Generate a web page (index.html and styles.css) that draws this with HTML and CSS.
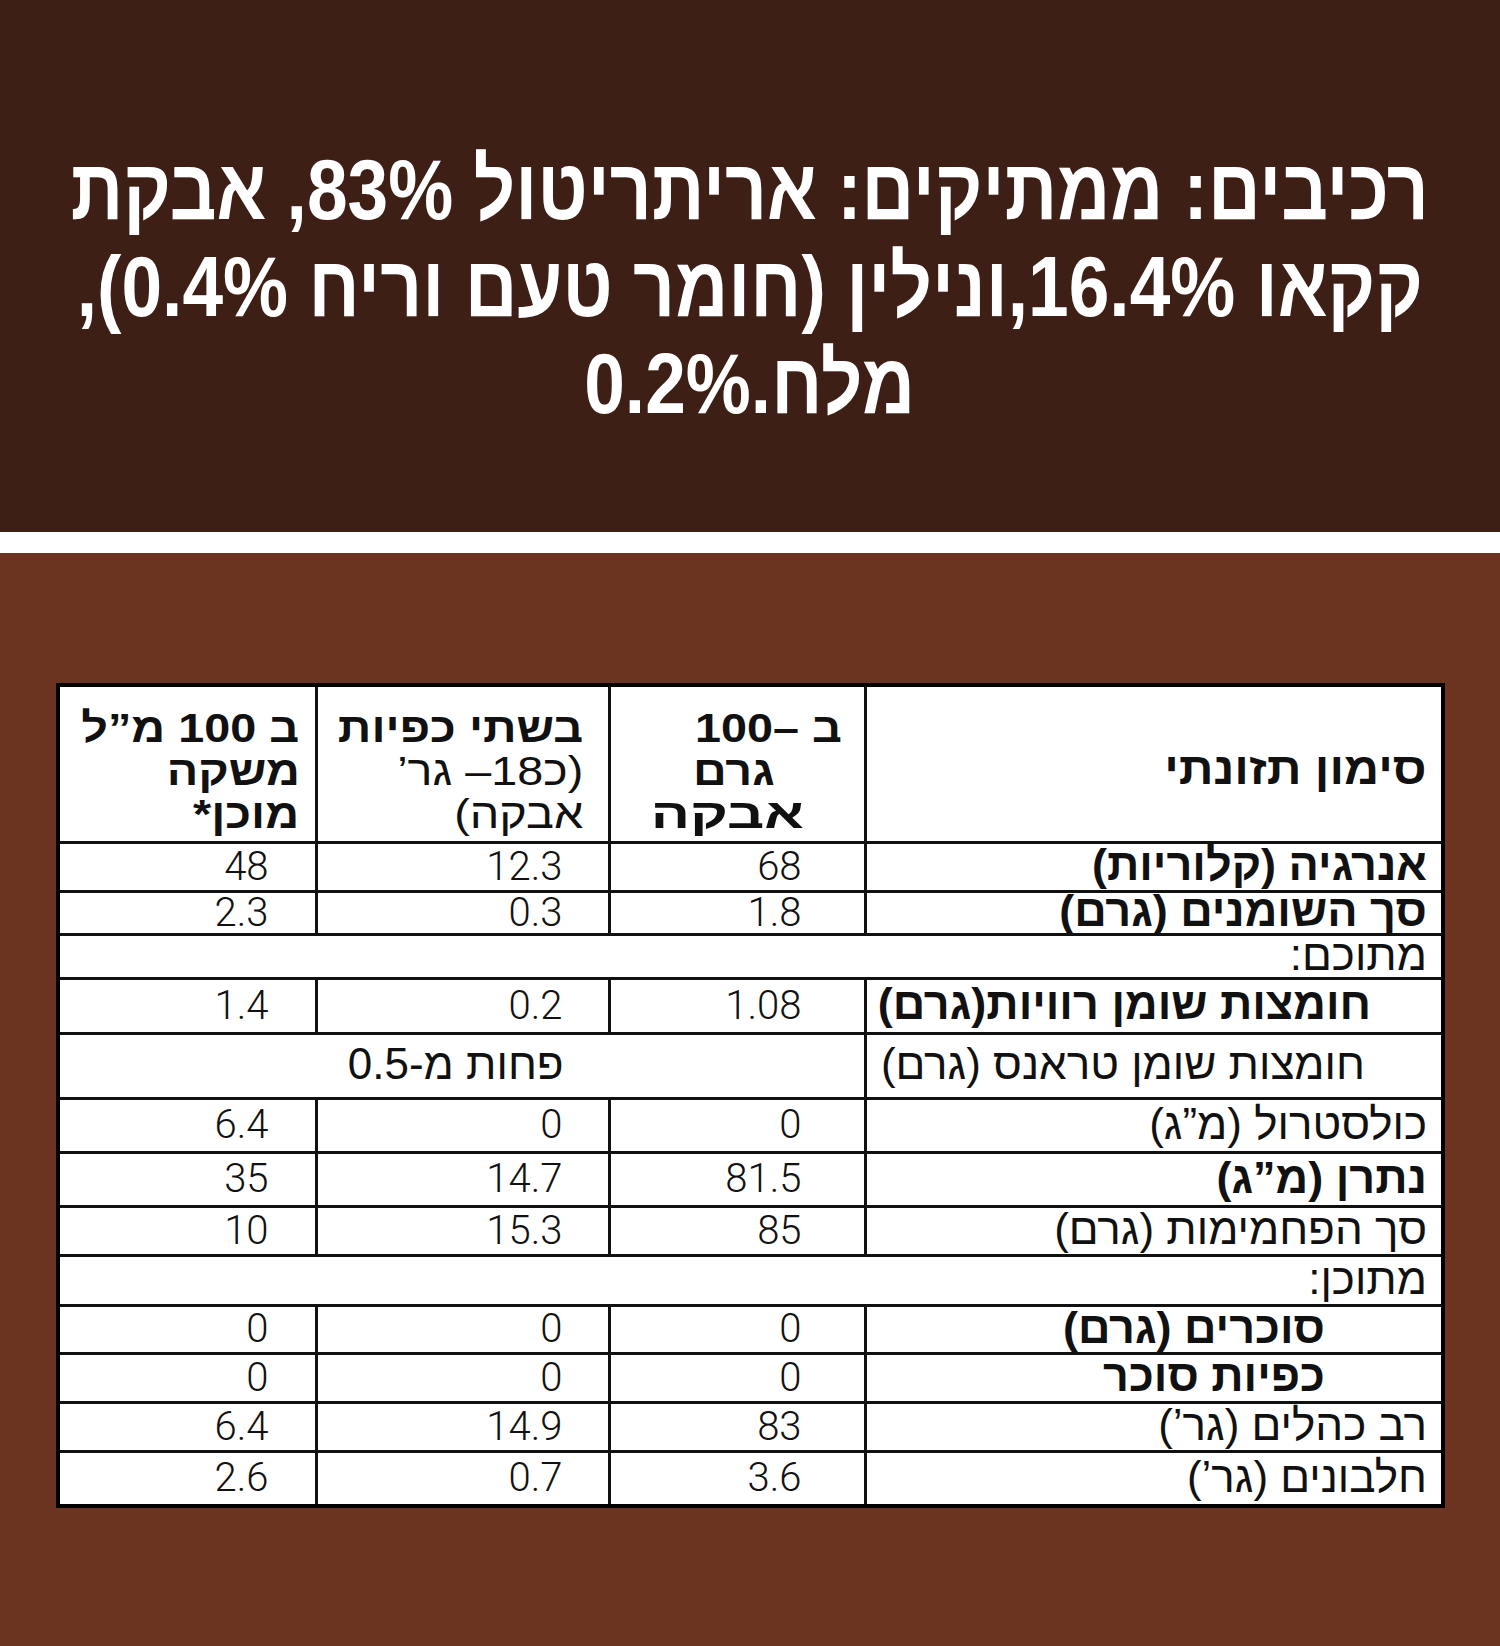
FILE: index.html
```html
<!DOCTYPE html>
<html lang="he">
<head>
<meta charset="utf-8">
<title>רכיבים וסימון תזונתי</title>
<link rel="stylesheet" href="styles.css">
</head>
<body>
<div class="top">
  <div class="title">
    <div class="tl">רכיבים: ממתיקים: אריתריטול 83%, אבקת</div>
    <div class="tl">קקאו 16.4%,ונילין (חומר טעם וריח 0.4%),</div>
    <div class="tl">מלח.0.2%</div>
  </div>
</div>
<div class="band"></div>
<div class="bottom">
  <table class="nut">
    <colgroup>
      <col class="c-lbl"><col class="c-g"><col class="c-tsp"><col class="c-ml">
    </colgroup>
    <tr class="r-head">
      <th class="h-lbl"><span class="lb b hd">סימון תזונתי</span></th>
      <th class="h-col h-g">
        <span class="hl g1"><span class="ht b">ב –100</span></span>
        <span class="hl g2"><span class="ht b">גרם</span></span>
        <span class="hl g3"><span class="ht b">אבקה</span></span>
      </th>
      <th class="h-col h-tsp">
        <span class="hl"><span class="ht b">בשתי כפיות</span></span>
        <span class="hl"><span class="ht">(כ18– גר’</span></span>
        <span class="hl"><span class="ht">אבקה)</span></span>
      </th>
      <th class="h-col h-ml">
        <span class="hl"><span class="ht b">ב 100 מ”ל</span></span>
        <span class="hl"><span class="ht b">משקה</span></span>
        <span class="hl"><span class="ht b">מוכן*</span></span>
      </th>
    </tr>
    <tr class="r-energy">
      <td class="lbl"><span class="lb b">אנרגיה (קלוריות)</span></td>
      <td class="num n-g">68</td><td class="num n-tsp">12.3</td><td class="num n-ml">48</td>
    </tr>
    <tr class="r-fat">
      <td class="lbl"><span class="lb b">סך השומנים (גרם)</span></td>
      <td class="num n-g">1.8</td><td class="num n-tsp">0.3</td><td class="num n-ml">2.3</td>
    </tr>
    <tr class="r-sub1">
      <td class="lbl sub" colspan="4"><span class="lb">מתוכם:</span></td>
    </tr>
    <tr class="r-sat">
      <td class="lbl lbl-sat"><span class="lb b">חומצות שומן רוויות(גרם)</span></td>
      <td class="num n-g">1.08</td><td class="num n-tsp">0.2</td><td class="num n-ml">1.4</td>
    </tr>
    <tr class="r-trans">
      <td class="lbl lbl-trans"><span class="lb">חומצות שומן טראנס (גרם)</span></td>
      <td class="merged" colspan="3"><span class="lb mc">פחות מ-0.5</span></td>
    </tr>
    <tr class="r-chol">
      <td class="lbl"><span class="lb">כולסטרול (מ”ג)</span></td>
      <td class="num n-g">0</td><td class="num n-tsp">0</td><td class="num n-ml">6.4</td>
    </tr>
    <tr class="r-sod">
      <td class="lbl"><span class="lb b">נתרן (מ”ג)</span></td>
      <td class="num n-g">81.5</td><td class="num n-tsp">14.7</td><td class="num n-ml">35</td>
    </tr>
    <tr class="r-carb">
      <td class="lbl"><span class="lb">סך הפחמימות (גרם)</span></td>
      <td class="num n-g">85</td><td class="num n-tsp">15.3</td><td class="num n-ml">10</td>
    </tr>
    <tr class="r-sub2">
      <td class="lbl sub" colspan="4"><span class="lb">מתוכן:</span></td>
    </tr>
    <tr class="r-sug">
      <td class="lbl lbl-in"><span class="lb b">סוכרים (גרם)</span></td>
      <td class="num n-g">0</td><td class="num n-tsp">0</td><td class="num n-ml">0</td>
    </tr>
    <tr class="r-tsp">
      <td class="lbl lbl-in"><span class="lb b">כפיות סוכר</span></td>
      <td class="num n-g">0</td><td class="num n-tsp">0</td><td class="num n-ml">0</td>
    </tr>
    <tr class="r-poly">
      <td class="lbl"><span class="lb">רב כהלים (גר’)</span></td>
      <td class="num n-g">83</td><td class="num n-tsp">14.9</td><td class="num n-ml">6.4</td>
    </tr>
    <tr class="r-prot">
      <td class="lbl"><span class="lb">חלבונים (גר’)</span></td>
      <td class="num n-g">3.6</td><td class="num n-tsp">0.7</td><td class="num n-ml">2.6</td>
    </tr>
  </table>
</div>
</body>
</html>
```
FILE: styles.css
```css
html, body {
  margin: 0;
  padding: 0;
}
body {
  width: 1500px;
  font-family: "Liberation Sans", "DejaVu Sans", sans-serif;
  background: #6a3420;
  overflow: hidden;
}
.top {
  height: 532px;
  box-sizing: border-box;
  padding-top: 141px;
  background: #3d1f16;
}
.title {
  direction: rtl;
  display: flex;
  flex-direction: column;
  align-items: center;
  color: #fff;
  font-weight: bold;
  font-size: 86px;
  line-height: 97px;
}
.tl {
  flex: none;
  transform: scaleX(0.85);
  transform-origin: center;
  white-space: nowrap;
}
.band {
  height: 21px;
  background: #fff;
}
.bottom {
  height: 1093px;
  box-sizing: border-box;
  padding-top: 130px;
  padding-left: 56px;
  background: #6a3420;
}
.nut {
  direction: rtl;
  border-collapse: collapse;
  table-layout: fixed;
  width: 1389px;
  background: #fff;
  border: 4px solid #000;
  color: #111;
}
.c-lbl { width: 578px; }
.c-g { width: 256px; }
.c-tsp { width: 293px; }
.c-ml { width: 258px; }
.nut th, .nut td {
  border: 3px solid #111;
  padding: 0;
  vertical-align: middle;
  overflow: visible;
}
.nut th {
  font-weight: normal;
}
.lb {
  display: inline-block;
  white-space: nowrap;
  font-size: 44px;
  line-height: 32px;
  font-weight: normal;
}
.lb.b {
  font-size: 45px;
  font-weight: bold;
}
.lb.hd {
  font-size: 44px;
  transform: scaleX(1.1);
  transform-origin: right center;
}
.b {
  font-weight: bold;
}
.lbl, .h-lbl {
  text-align: right;
  padding-right: 14px !important;
}
.h-lbl {
  padding-top: 14px !important;
}
.lbl-sat {
  padding-right: 70px !important;
}
.lbl-trans {
  padding-right: 76px !important;
}
.lbl-in {
  padding-right: 116px !important;
}
.h-col {
  vertical-align: top !important;
  text-align: right;
  padding-top: 20px !important;
}
.hl {
  display: block;
  white-space: nowrap;
  font-size: 41px;
  line-height: 43px;
}
.ht {
  display: inline-block;
  transform: scaleX(1.14);
  transform-origin: right center;
}
.h-g .g1 { padding-right: 22px; }
.h-g .g2 { padding-right: 89px; }
.h-g .g3 { padding-right: 60px; }
.h-g .g3 .ht { transform: scaleX(1.42); }
.h-tsp .hl { padding-right: 24px; }
.h-ml .hl { padding-right: 15px; }
.num {
  text-align: right;
  font-family: "Roboto", "Liberation Sans", sans-serif;
  font-weight: 300;
  font-size: 40px;
  line-height: 32px;
}
.n-g { padding-right: 62px !important; }
.n-tsp { padding-right: 45px !important; }
.n-ml { padding-right: 46px !important; }
.merged {
  text-align: center;
  padding-right: 12px !important;
}
.r-head { height: 157px; }
.r-energy { height: 49px; }
.r-fat { height: 43px; }
.r-sub1 { height: 44px; }
.r-sat { height: 55px; }
.r-trans { height: 65px; }
.r-chol { height: 54px; }
.r-sod { height: 54px; }
.r-carb { height: 49px; }
.r-sub2 { height: 50px; }
.r-sug { height: 48px; }
.r-tsp { height: 49px; }
.r-poly { height: 49px; }
.r-prot { height: 55px; }
```
